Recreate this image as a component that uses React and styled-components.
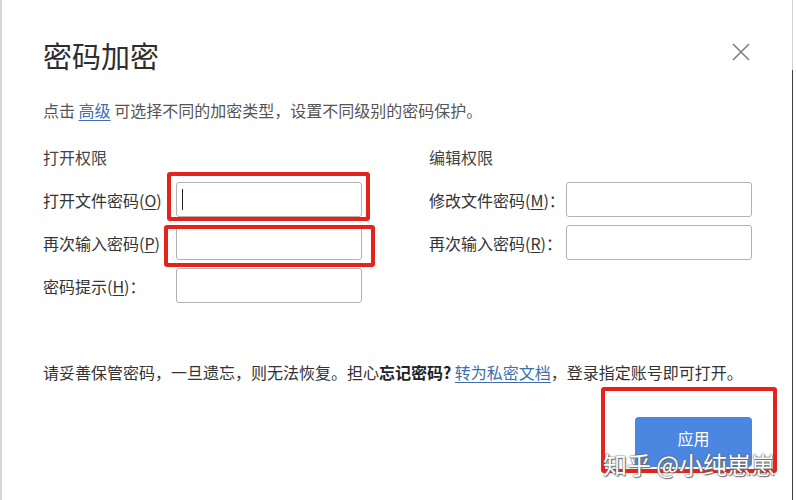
import React from "react";
import styled, { createGlobalStyle } from "styled-components";

const GlobalStyle = createGlobalStyle`
  html, body {
    margin: 0;
    padding: 0;
    background: #fff;
  }
  body {
    font-family: "Noto Sans CJK SC", "Noto Sans", sans-serif;
    color: #333;
  }
`;

const openRows = [
  { label: "打开文件密码", key: "O", colon: false, caret: true, mark: { t: -10, r: -8, b: -4, l: -9 } },
  { label: "再次输入密码", key: "P", colon: false, mark: { t: 0, r: -13, b: -7, l: -12 } },
  { label: "密码提示", key: "H", colon: true },
];

const editRows = [
  { label: "修改文件密码", key: "M", colon: true },
  { label: "再次输入密码", key: "R", colon: true },
];

export default function App() {
  return (
    <>
      <GlobalStyle />
      <Dialog>
        <Header>
          <Title>密码加密</Title>
          <Close aria-label="关闭">
            <svg width="18" height="18" viewBox="0 0 18 18">
              <path d="M1 1 L17 17 M17 1 L1 17" stroke="#7a7a7a" strokeWidth="1.5" fill="none" />
            </svg>
          </Close>
        </Header>
        <Desc>
          点击 <Link>高级</Link> 可选择不同的加密类型，设置不同级别的密码保护。
        </Desc>
        <Columns>
          <Column>
            <SectionTitle>打开权限</SectionTitle>
            <Rows>
              {openRows.map((r) => (
                <Row key={r.key}>
                  <Label $w={133}>
                    {r.label}(<u>{r.key}</u>){r.colon ? "：" : ""}
                  </Label>
                  <Field>
                    <Input />
                    {r.caret && <Caret />}
                    {r.mark && <Mark $m={r.mark} />}
                  </Field>
                </Row>
              ))}
            </Rows>
          </Column>
          <Divider />
          <Column $right>
            <SectionTitle>编辑权限</SectionTitle>
            <Rows>
              {editRows.map((r) => (
                <Row key={r.key}>
                  <Label $w={137}>
                    {r.label}(<u>{r.key}</u>)：
                  </Label>
                  <Field>
                    <Input />
                  </Field>
                </Row>
              ))}
            </Rows>
          </Column>
        </Columns>
        <Notice>
          请妥善保管密码，一旦遗忘，则无法恢复。担心<b>忘记密码?</b> <Link>转为私密文档</Link>，登录指定账号即可打开。
        </Notice>
        <Footer>
          <ButtonWrap>
            <Button>应用</Button>
            <Mark $m={{ t: -30, r: -25, b: -6, l: -34 }} />
          </ButtonWrap>
          <Watermark>知乎 @小纯崽崽</Watermark>
        </Footer>
      </Dialog>
    </>
  );
}

const Dialog = styled.div`
  position: relative;
  box-sizing: border-box;
  width: 796px;
  height: 500px;
  padding: 35px 41px 0 41px;
  border-left: 2px solid #d6d6d6;
  border-right: 3px solid #fff;
  overflow: hidden;
  &::after {
    content: "";
    position: absolute;
    right: 0;
    top: 0;
    bottom: 0;
    width: 1px;
    background: linear-gradient(#cfcfcf 0, #cfcfcf 70px, #3a3f48 70px);
  }
`;

const Header = styled.div`
  display: flex;
  justify-content: space-between;
  align-items: flex-start;
`;

const Title = styled.h1`
  margin: 0;
  font-size: 29px;
  line-height: 40px;
  font-weight: 400;
  color: #2e2e2e;
`;

const Close = styled.div`
  margin-top: 8px;
  margin-right: 2px;
  width: 18px;
  height: 18px;
  svg {
    display: block;
  }
`;

const Desc = styled.p`
  margin: 23px 0 0;
  font-size: 16px;
  line-height: 24px;
  color: #555;
`;

const Link = styled.span`
  color: #3d6fae;
  text-decoration: underline;
  text-underline-offset: 3px;
`;

const Columns = styled.div`
  display: flex;
  margin-top: 22px;
  height: 201px;
`;

const Column = styled.div`
  width: ${(p) => (p.$right ? "auto" : "354px")};
  flex: ${(p) => (p.$right ? "1" : "none")};
  padding-left: ${(p) => (p.$right ? "32px" : "0")};
`;

const Divider = styled.div`
  width: 1px;
  background: #e2e2e2;
`;

const SectionTitle = styled.div`
  margin-top: 1px;
  font-size: 16px;
  line-height: 24px;
  color: #444;
`;

const Rows = styled.div`
  display: flex;
  flex-direction: column;
  gap: 8px;
  margin-top: 13px;
`;

const Row = styled.div`
  display: flex;
  align-items: center;
  height: 35px;
`;

const Label = styled.div`
  width: ${(p) => p.$w}px;
  flex: none;
  font-size: 16px;
  line-height: 24px;
  color: #333;
  white-space: nowrap;
  u {
    text-underline-offset: 2px;
  }
`;

const Field = styled.div`
  position: relative;
  width: 186px;
  height: 35px;
`;

const Input = styled.div`
  box-sizing: border-box;
  width: 100%;
  height: 100%;
  border: 1px solid #b3b3b3;
  border-radius: 3px;
  background: #fff;
`;

const Caret = styled.span`
  position: absolute;
  left: 6px;
  top: 7px;
  width: 1px;
  height: 21px;
  background: #222;
`;

const Mark = styled.span`
  position: absolute;
  top: ${(p) => p.$m.t}px;
  right: ${(p) => p.$m.r}px;
  bottom: ${(p) => p.$m.b}px;
  left: ${(p) => p.$m.l}px;
  border: 4px solid #e5231c;
  border-radius: 3px;
  pointer-events: none;
`;

const Notice = styled.p`
  margin: 15px 0 0;
  font-size: 16px;
  line-height: 24px;
  color: #333;
  white-space: nowrap;
  b {
    font-weight: 700;
    color: #222;
  }
`;

const Footer = styled.div`
  position: relative;
  display: flex;
  justify-content: flex-end;
  margin-top: 33px;
`;

const ButtonWrap = styled.div`
  position: relative;
`;

const Button = styled.button`
  display: block;
  width: 117px;
  height: 50px;
  border: none;
  border-radius: 4px;
  background: #4b86e1;
  color: #fff;
  font-family: inherit;
  font-size: 16px;
  padding: 0 0 8px;
`;

const Watermark = styled.div`
  position: absolute;
  right: -23px;
  top: 31px;
  font-size: 24px;
  line-height: 32px;
  color: #fff;
  white-space: nowrap;
  text-shadow: 0 0 1px #555, 0 0 2px #666, 1px 1px 1px #777;
`;
